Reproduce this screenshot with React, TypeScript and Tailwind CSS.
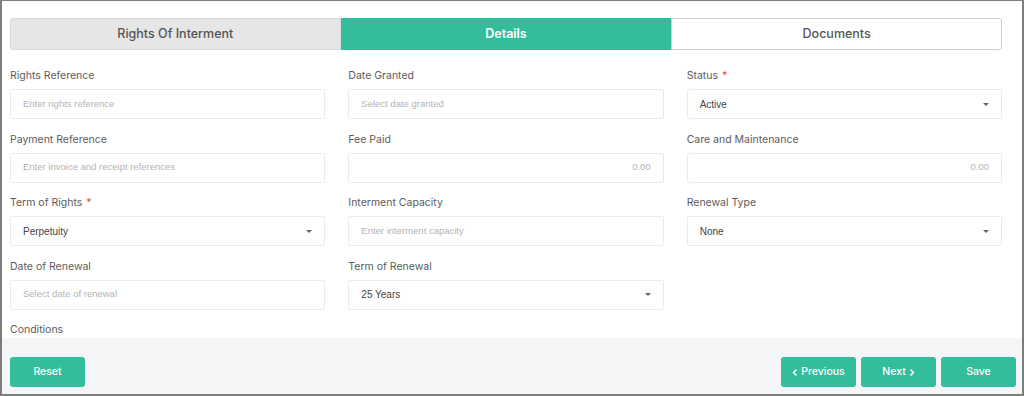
import React from 'react';

type Field = {
  label: string;
  required?: boolean;
  placeholder?: string;
  value?: string;
  select?: boolean;
  align?: 'right';
};

const rows: (Field | null)[][] = [
  [
    { label: 'Rights Reference', placeholder: 'Enter rights reference' },
    { label: 'Date Granted', placeholder: 'Select date granted' },
    { label: 'Status', required: true, value: 'Active', select: true },
  ],
  [
    { label: 'Payment Reference', placeholder: 'Enter invoice and receipt references' },
    { label: 'Fee Paid', placeholder: '0.00', align: 'right' },
    { label: 'Care and Maintenance', placeholder: '0.00', align: 'right' },
  ],
  [
    { label: 'Term of Rights', required: true, value: 'Perpetuity', select: true },
    { label: 'Interment Capacity', placeholder: 'Enter interment capacity' },
    { label: 'Renewal Type', value: 'None', select: true },
  ],
  [
    { label: 'Date of Renewal', placeholder: 'Select date of renewal' },
    { label: 'Term of Renewal', value: '25 Years', select: true },
    null,
  ],
];

const labelFont = { fontFamily: 'Inter, "Noto Sans", sans-serif' };
const inputFont = { fontFamily: '"Liberation Sans", Arial, sans-serif' };

const Caret = () => (
  <svg width="6" height="3" viewBox="0 0 6 3" className="shrink-0">
    <path d="M0 0 L6 0 L3 3 Z" fill="#666" />
  </svg>
);

const FormField: React.FC<{ field: Field }> = ({ field }) => (
  <div className="flex flex-col">
    <div className="h-4 mb-[5px] flex items-center text-[10.5px] text-[#5c5c5c]" style={labelFont}>
      {field.label}
      {field.required && <span className="text-[#e0474c] ml-1">*</span>}
    </div>
    <div
      className={`h-[30px] border border-[#ebebeb] rounded-[2px] bg-white flex items-center px-3 text-[9.5px] ${
        field.align === 'right' ? 'justify-end' : 'justify-between'
      }`}
      style={inputFont}
    >
      {field.value ? (
        <span className="text-[#444] text-[10px]">{field.value}</span>
      ) : (
        <span className="text-[#b4b4b4]">{field.placeholder}</span>
      )}
      {field.select && <Caret />}
    </div>
  </div>
);

const Chevron: React.FC<{ dir: 'left' | 'right' }> = ({ dir }) => (
  <svg width="5" height="7" viewBox="0 0 5 7">
    <path
      d={dir === 'left' ? 'M4 1 L1.5 3.5 L4 6' : 'M1 1 L3.5 3.5 L1 6'}
      fill="none"
      stroke="white"
      strokeWidth="1.6"
      strokeLinecap="round"
      strokeLinejoin="round"
    />
  </svg>
);

const Btn: React.FC<{ children: React.ReactNode }> = ({ children }) => (
  <button
    className="w-[75px] h-[30px] rounded-[3px] bg-[#34bd9d] text-white text-[10.5px] font-medium flex items-center justify-center gap-1"
    style={labelFont}
  >
    {children}
  </button>
);

export default function App() {
  return (
    <div className="w-[1024px] h-[396px] bg-white border-l-2 border-r-2 border-b-2 border-t border-[#7d7d7d] flex flex-col overflow-hidden">
      <div className="flex-1 overflow-hidden pl-2 pr-5 pt-[17px]">
        <div className="grid grid-cols-3 h-8 text-[12.5px]" style={labelFont}>
          <div className="bg-[#e6e6e6] border border-[#d9d9d9] rounded-l-[3px] flex items-center justify-center text-[#555] font-medium">
            Rights Of Interment
          </div>
          <div className="bg-[#34bd9d] flex items-center justify-center text-white font-semibold">
            Details
          </div>
          <div className="bg-white border border-[#d0d0d0] rounded-r-[3px] flex items-center justify-center text-[#555] font-medium">
            Documents
          </div>
        </div>

        <div className="grid grid-cols-3 gap-x-[23px] gap-y-[12.5px] mt-[18px]">
          {rows.flat().map((f, i) => (f ? <FormField key={i} field={f} /> : <div key={i} />))}
          <div className="h-4 flex items-center text-[10.5px] text-[#5c5c5c]" style={labelFont}>
            Conditions
          </div>
        </div>
      </div>

      <div className="h-[56px] bg-[#f4f5f7] flex items-start justify-between pl-2 pr-[6px] pt-[19px]">
        <Btn>Reset</Btn>
        <div className="flex gap-[5px]">
          <Btn>
            <Chevron dir="left" />
            Previous
          </Btn>
          <Btn>
            Next
            <Chevron dir="right" />
          </Btn>
          <Btn>Save</Btn>
        </div>
      </div>
    </div>
  );
}
